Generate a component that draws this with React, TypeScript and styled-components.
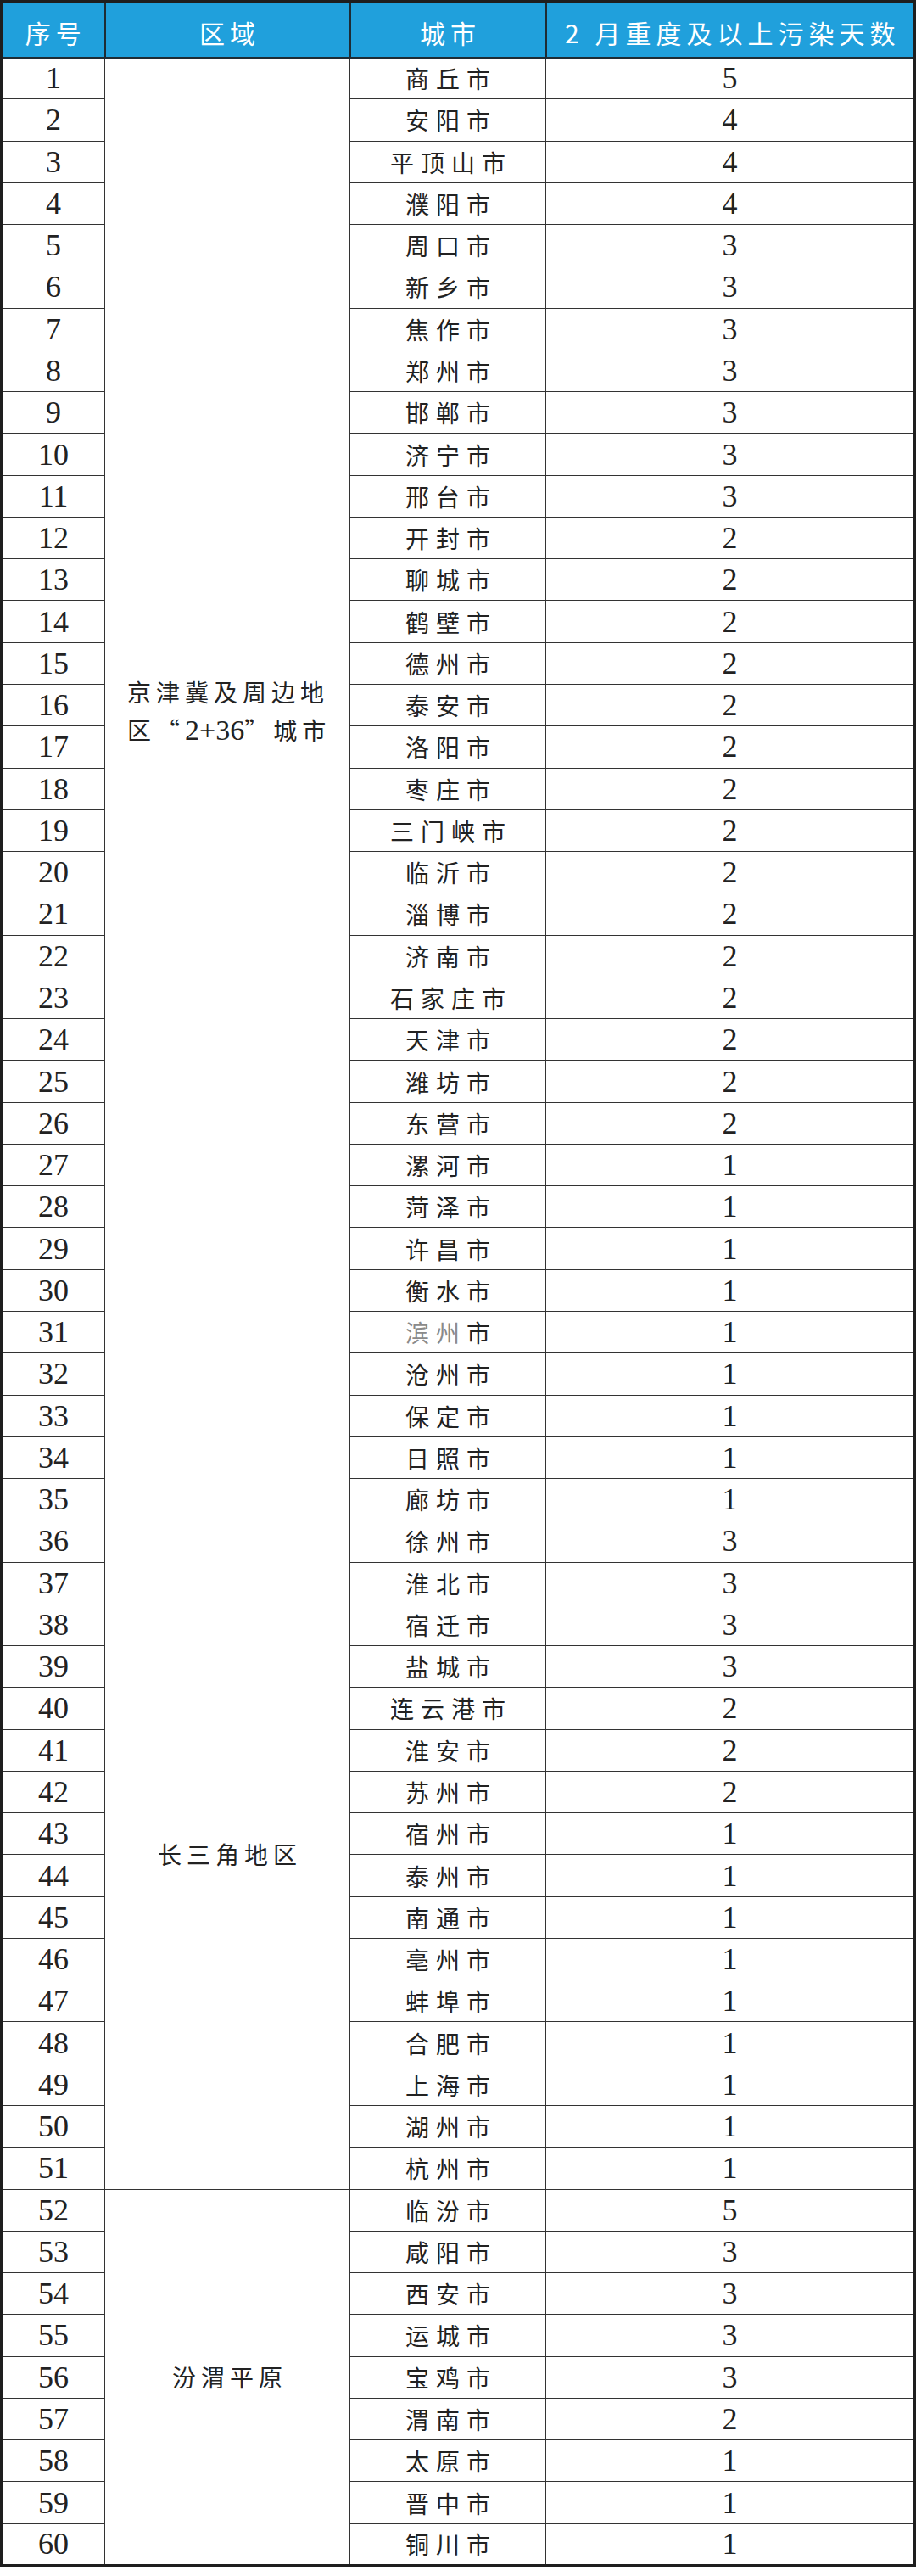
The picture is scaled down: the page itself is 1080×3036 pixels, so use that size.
import React from "react";
import styled, { createGlobalStyle } from "styled-components";

type Row = { city: string; days: number; faded?: number };

interface Region {
    name: React.ReactNode;
    lift?: number;
    rows: Row[];
}

const cjk = `"Noto Sans CJK SC", "Noto Sans", sans-serif`;
const serif = `"Liberation Serif", "Times New Roman", serif`;

const GlobalStyle = createGlobalStyle`
    html, body {
        margin: 0;
        padding: 0;
        background: #ffffff;
    }
    body {
        width: 1080px;
        height: 3036px;
        overflow: hidden;
    }
    td, th {
        box-sizing: border-box;
    }
`;

const Table = styled.table`
    width: 1077px;
    table-layout: fixed;
    border-collapse: collapse;
    border: 3px solid #1e1e1e;
    color: #222;
`;

const HeadRow = styled.tr`
    height: 66px;
    background: #20a0dc;
`;

const HeadCell = styled.th<{ $w: number }>`
    width: ${(p) => p.$w}px;
    padding: 6px 0 0 6px;
    border: 2px solid #1e2c34;
    color: #ffffff;
    font-family: ${cjk};
    font-size: 30px;
    font-weight: 400;
    letter-spacing: 6px;
    line-height: 1;
    text-align: center;
    white-space: nowrap;
    overflow: hidden;
`;

const BodyRow = styled.tr`
    height: 49.28px;
`;

const NumCell = styled.td`
    padding: 0;
    border: 1.5px solid #333;
    font-family: ${serif};
    font-size: 36px;
    line-height: 1;
    text-align: center;
    vertical-align: middle;
`;

const CityCell = styled.td`
    padding: 0 0 0 8px;
    border: 1.5px solid #333;
    font-family: ${cjk};
    font-size: 28px;
    letter-spacing: 8px;
    line-height: 1;
    text-align: center;
    vertical-align: middle;
    white-space: nowrap;
`;

const RegionCell = styled.td<{ $lift: number }>`
    padding: 0 20px ${(p) => p.$lift}px 26px;
    border: 1.5px solid #333;
    font-family: ${cjk};
    font-size: 28px;
    letter-spacing: 6px;
    line-height: 45px;
    text-align: center;
    vertical-align: middle;
`;

const RegionLine = styled.span`
    display: block;
    text-align: left;
    white-space: nowrap;
`;

const Latin = styled.span`
    font-family: ${serif};
    font-size: 34px;
    letter-spacing: 0;
`;

const Faded = styled.span`
    color: #8a8a8a;
`;

const regions: Region[] = [
    {
        name: (
            <>
                <RegionLine>京津冀及周边地</RegionLine>
                <RegionLine>
                    区“<Latin>2+36</Latin>”城市
                </RegionLine>
            </>
        ),
        lift: 184,
        rows: [
            { city: "商丘市", days: 5 },
            { city: "安阳市", days: 4 },
            { city: "平顶山市", days: 4 },
            { city: "濮阳市", days: 4 },
            { city: "周口市", days: 3 },
            { city: "新乡市", days: 3 },
            { city: "焦作市", days: 3 },
            { city: "郑州市", days: 3 },
            { city: "邯郸市", days: 3 },
            { city: "济宁市", days: 3 },
            { city: "邢台市", days: 3 },
            { city: "开封市", days: 2 },
            { city: "聊城市", days: 2 },
            { city: "鹤壁市", days: 2 },
            { city: "德州市", days: 2 },
            { city: "泰安市", days: 2 },
            { city: "洛阳市", days: 2 },
            { city: "枣庄市", days: 2 },
            { city: "三门峡市", days: 2 },
            { city: "临沂市", days: 2 },
            { city: "淄博市", days: 2 },
            { city: "济南市", days: 2 },
            { city: "石家庄市", days: 2 },
            { city: "天津市", days: 2 },
            { city: "潍坊市", days: 2 },
            { city: "东营市", days: 2 },
            { city: "漯河市", days: 1 },
            { city: "菏泽市", days: 1 },
            { city: "许昌市", days: 1 },
            { city: "衡水市", days: 1 },
            { city: "滨州市", days: 1, faded: 2 },
            { city: "沧州市", days: 1 },
            { city: "保定市", days: 1 },
            { city: "日照市", days: 1 },
            { city: "廊坊市", days: 1 },
        ],
    },
    {
        name: "长三角地区",
        rows: [
            { city: "徐州市", days: 3 },
            { city: "淮北市", days: 3 },
            { city: "宿迁市", days: 3 },
            { city: "盐城市", days: 3 },
            { city: "连云港市", days: 2 },
            { city: "淮安市", days: 2 },
            { city: "苏州市", days: 2 },
            { city: "宿州市", days: 1 },
            { city: "泰州市", days: 1 },
            { city: "南通市", days: 1 },
            { city: "亳州市", days: 1 },
            { city: "蚌埠市", days: 1 },
            { city: "合肥市", days: 1 },
            { city: "上海市", days: 1 },
            { city: "湖州市", days: 1 },
            { city: "杭州市", days: 1 },
        ],
    },
    {
        name: "汾渭平原",
        rows: [
            { city: "临汾市", days: 5 },
            { city: "咸阳市", days: 3 },
            { city: "西安市", days: 3 },
            { city: "运城市", days: 3 },
            { city: "宝鸡市", days: 3 },
            { city: "渭南市", days: 2 },
            { city: "太原市", days: 1 },
            { city: "晋中市", days: 1 },
            { city: "铜川市", days: 1 },
        ],
    },
];

const CityName: React.FC<{ row: Row }> = ({ row }) => {
    if (!row.faded) return <>{row.city}</>;
    return (
        <>
            <Faded>{row.city.slice(0, row.faded)}</Faded>
            {row.city.slice(row.faded)}
        </>
    );
};

const App: React.FC = () => {
    let index = 0;

    return (
        <>
            <GlobalStyle />
            <Table>
                <thead>
                    <HeadRow>
                        <HeadCell $w={122}>序号</HeadCell>
                        <HeadCell $w={289}>区域</HeadCell>
                        <HeadCell $w={231}>城市</HeadCell>
                        <HeadCell $w={435}>2 月重度及以上污染天数</HeadCell>
                    </HeadRow>
                </thead>
                <tbody>
                    {regions.map((region) =>
                        region.rows.map((row, i) => {
                            index += 1;
                            return (
                                <BodyRow key={index}>
                                    <NumCell>{index}</NumCell>
                                    {i === 0 && (
                                        <RegionCell rowSpan={region.rows.length} $lift={region.lift ?? 0}>
                                            {region.name}
                                        </RegionCell>
                                    )}
                                    <CityCell>
                                        <CityName row={row} />
                                    </CityCell>
                                    <NumCell>{row.days}</NumCell>
                                </BodyRow>
                            );
                        })
                    )}
                </tbody>
            </Table>
        </>
    );
};

export default App;
